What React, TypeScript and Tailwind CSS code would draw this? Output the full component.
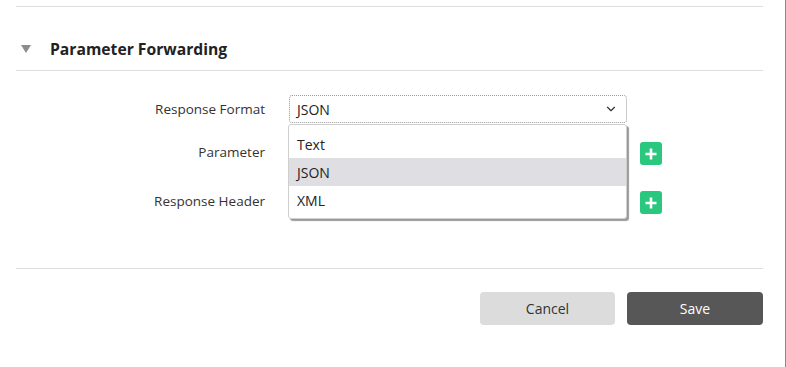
import { ChevronDown } from 'lucide-react';

const PlusButton = () => (
  <button className="flex h-[23px] w-[22px] items-center justify-center rounded-[3px] bg-[#2ac77e]">
    <svg width="12" height="12" viewBox="0 0 12 12">
      <path d="M6 0.5v11M0.5 6h11" stroke="#fff" strokeWidth="2.6" />
    </svg>
  </button>
);

const App: React.FC = () => {
  const options = ['Text', 'JSON', 'XML'];

  return (
    <div
      className="flex h-[367px] w-[786px] border-r border-[#8a8a8a] bg-white text-[#333]"
      style={{ fontFamily: '"Open Sans", "Noto Sans", sans-serif' }}
    >
      <div className="flex w-[769px] flex-col pl-4 pr-[6px]">
        {/* top divider */}
        <div className="mt-[6px] border-t border-[#dedede]" />

        {/* section header */}
        <div className="flex items-center border-b border-[#dedede] pb-[10px] pt-[31px]">
          <svg width="10" height="8" viewBox="0 0 10 8" className="ml-[5px]">
            <path d="M0 0h10L5 8z" fill="#8c8c8c" />
          </svg>
          <span className="ml-[19px] text-[15.7px] font-bold leading-[22px] text-[#222]">
            Parameter Forwarding
          </span>
        </div>

        {/* form */}
        <div className="flex flex-col pt-[24px]">
          <div className="flex items-center">
            <label className="w-[249px] text-right text-[13.5px] leading-[20px] text-[#333]">
              Response Format
            </label>
            <div className="relative ml-[24px] w-[338px]">
              <div className="flex h-[28px] items-center justify-between rounded-[3px] border border-dotted border-[#9a9a9a] pl-[7px] pr-[8px] text-[14px] text-[#222]">
                <span>JSON</span>
                <ChevronDown size={14} strokeWidth={2} className="text-[#333]" />
              </div>
              <div className="absolute -left-px top-[29px] z-10 w-[339px] rounded-[3px] border border-[#cfcfcf] bg-white pb-[4px] pt-[5px] shadow-[2px_2px_1px_#9a9a9a]">
                {options.map((o) => (
                  <div
                    key={o}
                    className={`flex h-[28px] items-center px-[8px] text-[14px] text-[#222] ${
                      o === 'JSON' ? 'bg-[#dfdee3]' : ''
                    }`}
                  >
                    {o}
                  </div>
                ))}
              </div>
            </div>
          </div>

          <div className="mt-[19px] flex items-start">
            <label className="w-[249px] text-right text-[13.5px] leading-[20px] text-[#333]">
              Parameter
            </label>
            <div className="ml-[24px] w-[338px]" />
            <div className="ml-[13px]">
              <PlusButton />
            </div>
          </div>

          <div className="mt-[26px] flex items-start">
            <label className="w-[249px] text-right text-[13.5px] leading-[20px] text-[#333]">
              Response Header
            </label>
            <div className="ml-[24px] w-[338px]" />
            <div className="ml-[13px]">
              <PlusButton />
            </div>
          </div>
        </div>

        {/* bottom divider */}
        <div className="mt-[54px] border-t border-[#dedede]" />

        {/* actions */}
        <div className="mt-[23px] flex justify-end gap-[12px]">
          <button className="h-[33px] w-[135px] rounded-[4px] bg-[#dcdcdc] text-[14px] text-[#333]">
            Cancel
          </button>
          <button className="h-[33px] w-[136px] rounded-[4px] bg-[#575757] text-[14px] text-white">
            Save
          </button>
        </div>
      </div>
    </div>
  );
};

export default App;
